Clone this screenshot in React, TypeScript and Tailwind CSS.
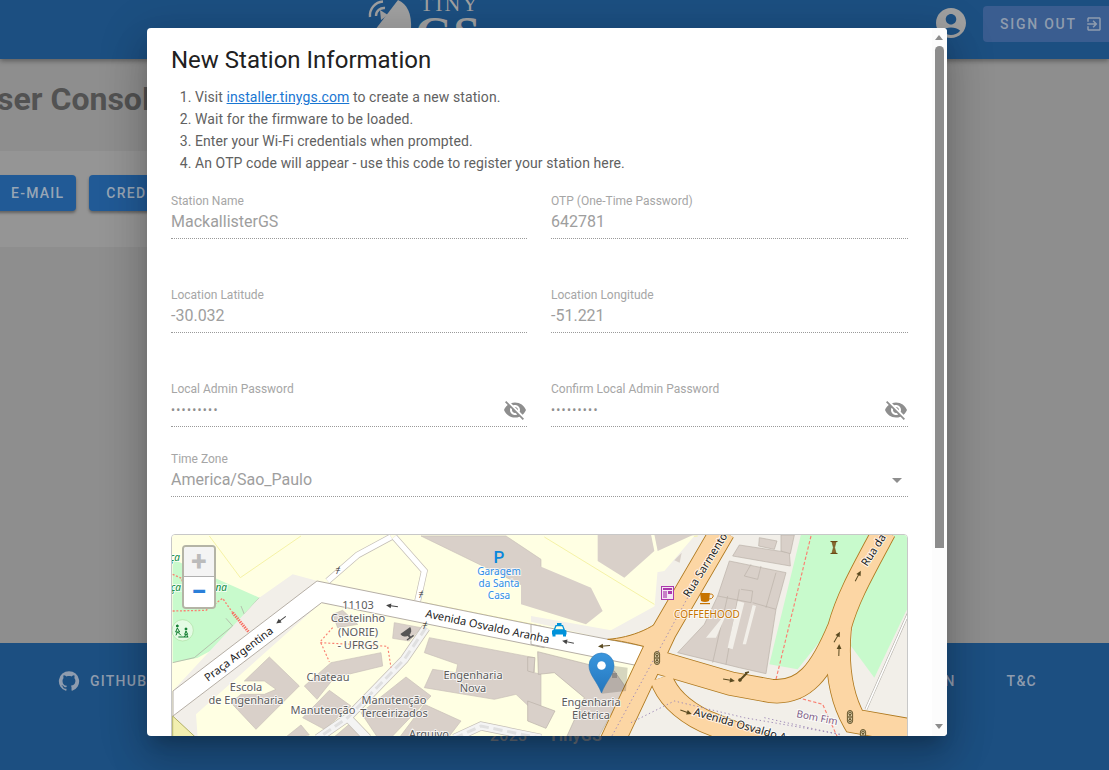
import { ReactNode } from 'react';

const ACCOUNT = 'M12 2C6.48 2 2 6.48 2 12s4.48 10 10 10 10-4.48 10-10S17.52 2 12 2zm0 4c1.93 0 3.5 1.57 3.5 3.5S13.93 13 12 13s-3.5-1.57-3.5-3.5S10.07 6 12 6zm0 14c-2.03 0-4.43-.82-6.14-2.88C7.55 15.8 9.68 15 12 15s4.45.8 6.14 2.12C16.43 19.18 14.03 20 12 20z';
const EXIT = 'M10.09 15.59L11.5 17l5-5-5-5-1.41 1.41L12.67 11H3v2h9.67l-2.58 2.59zM19 3H5c-1.11 0-2 .9-2 2v4h2V5h14v14H5v-4H3v4c0 1.1.89 2 2 2h14c1.1 0 2-.9 2-2V5c0-1.1-.9-2-2-2z';
const EYE_OFF = 'M12 7c2.76 0 5 2.24 5 5 0 .65-.13 1.26-.36 1.83l2.92 2.92c1.51-1.26 2.7-2.89 3.43-4.75-1.73-4.39-6-7.5-11-7.5-1.4 0-2.74.25-3.98.7l2.16 2.16C10.74 7.13 11.35 7 12 7zM2 4.27l2.28 2.28.46.46C3.08 8.3 1.78 10.02 1 12c1.73 4.39 6 7.5 11 7.5 1.55 0 3.03-.3 4.38-.84l.42.42L19.73 22 21 20.73 3.27 3 2 4.27zM7.53 9.8l1.55 1.55c-.05.21-.08.43-.08.65 0 1.66 1.34 3 3 3 .22 0 .44-.03.65-.08l1.55 1.55c-.67.33-1.41.53-2.2.53-2.76 0-5-2.24-5-5 0-.79.2-1.53.53-2.2zm4.31-.78l3.15 3.15.02-.16c0-1.66-1.34-3-3-3l-.17.01z';
const GITHUB = 'M12 1.27a11 11 0 00-3.48 21.46c.55.09.73-.28.73-.55v-1.84c-3.03.64-3.67-1.46-3.67-1.46-.55-1.29-1.28-1.65-1.28-1.65-.92-.65.1-.65.1-.65 1.1 0 1.73 1.1 1.73 1.1.92 1.65 2.57 1.2 3.21.92a2 2 0 01.64-1.47c-2.47-.27-5.04-1.19-5.04-5.5 0-1.1.46-2.1 1.2-2.84a3.76 3.76 0 010-2.93s.91-.28 3.11 1.1c1.8-.49 3.7-.49 5.5 0 2.1-1.38 3.02-1.1 3.02-1.1a3.76 3.76 0 010 2.93c.83.74 1.2 1.74 1.2 2.94 0 4.21-2.57 5.13-5.04 5.4.45.37.82.92.82 2.02v3.03c0 .27.1.64.73.55A11 11 0 0012 1.27';

function MuiIcon({ d, className }: { d: string; className: string }) {
  return (
    <svg viewBox="0 0 24 24" fill="currentColor" className={className}>
      <path d={d} />
    </svg>
  );
}

function Field({ label, value, eye }: { label: string; value: string; eye?: boolean }) {
  return (
    <div className="h-[45px] border-b border-dotted border-[#9a9a9a]">
      <div className="h-[14px] text-xs leading-[14px] text-[#a6a6a6]">{label}</div>
      <div className="mt-[2px] flex h-[24px] items-center justify-between text-base text-[#9e9e9e]">
        <span className={eye ? 'text-xs tracking-[1.25px] text-[#8e8e8e]' : ''}>{value}</span>
        {eye && <MuiIcon d={EYE_OFF} className="-mt-px h-6 w-6 text-[#8e8e8e]" />}
      </div>
    </div>
  );
}

function Arrow({ x, y, r, color = '#5a4a20' }: { x: number; y: number; r: number; color?: string }) {
  return (
    <g transform={`translate(${x} ${y}) rotate(${r})`} stroke={color} fill={color}>
      <line x1="-6" y1="0" x2="3" y2="0" strokeWidth="1" />
      <path d="M6 0 L1 -2.4 L1 2.4 Z" stroke="none" />
    </g>
  );
}

function Label({ x, y, children, size = 11, fill = '#5c5c5c', rotate, anchor = 'middle' }: { x: number; y: number; children: ReactNode; size?: number; fill?: string; rotate?: number; anchor?: 'middle' | 'start' | 'end' }) {
  return (
    <text
      x={x}
      y={y}
      fontSize={size}
      fill={fill}
      textAnchor={anchor}
      stroke="#ffffff"
      strokeOpacity={0.75}
      strokeWidth={2}
      paintOrder="stroke"
      transform={rotate ? `rotate(${rotate} ${x} ${y})` : undefined}
    >
      {children}
    </text>
  );
}

function Signal({ x, y }: { x: number; y: number }) {
  return (
    <g transform={`translate(${x} ${y})`} fill="none" stroke="#5a4a20" strokeWidth="0.9">
      <rect x="-2.6" y="-6.5" width="5.2" height="13" rx="2.6" fill="#d8c9a4" />
      <circle cx="0" cy="-3.6" r="1.3" />
      <circle cx="0" cy="0" r="1.3" />
      <circle cx="0" cy="3.6" r="1.3" />
    </g>
  );
}

const ORANGE_ROADS = [
  { d: 'M575 0 L400 300 L240 640', w: 72 },
  { d: 'M385 395 L600 458 L720 480 C820 490 870 420 925 290 C950 200 990 130 1060 0', w: 68 },
  { d: 'M925 290 C915 400 930 500 970 570 L1140 600', w: 70 },
  { d: 'M390 440 C410 500 460 540 520 570 L720 650', w: 66 },
];
const SLIP = 'M420 235 C380 290 300 320 230 325 C290 332 330 345 362 352 L400 300 Z';

function StationMap() {
  return (
    <svg viewBox="171 534 737 202" className="block h-[202px] w-[737px] font-['Noto_Sans',sans-serif]">
      <defs>
        <linearGradient id="pin" x1="0" y1="0" x2="0" y2="1">
          <stop offset="0" stopColor="#3a96dd" />
          <stop offset="1" stopColor="#2476bd" />
        </linearGradient>
      </defs>
      <rect x="171" y="534" width="737" height="202" fill="#ffffe3" />

      {/* left half, coordinates measured from (160,530) at 3x */}
      <g transform="translate(160 530) scale(0.33333)">
        <path d="M145 15 L238 140 L420 15" fill="none" stroke="#f5f2a6" strokeWidth="3" />
        <path d="M790 215 L1140 285 M1140 160 L1030 135" fill="none" stroke="#f5f2a6" strokeWidth="3" />
        <path d="M35 85 L295 200 L260 300 L110 380 L35 395 Z" fill="#c8facc" />
        <path d="M35 395 L100 380 L215 285 M295 200 L250 250 L240 225 M195 262 L215 285" fill="none" stroke="#a9a39b" strokeWidth="2" />
        <path d="M295 200 L395 130 L470 150 L480 215 L105 550 L110 620 L35 620 L35 480 Z" fill="#f2efe9" />
        <path d="M35 555 L105 620 L35 620 Z" fill="#f2efb0" stroke="#8f8f30" strokeWidth="2" />
        <circle cx="65" cy="298" r="32" fill="#e4fbe4" stroke="#aedfa3" strokeWidth="2" />
        <g fill="#0d7a2c" stroke="#0d7a2c" strokeWidth="3">
          <circle cx="49" cy="285" r="3" />
          <circle cx="75" cy="294" r="3" />
          <path d="M49 291 L44 303 L56 303 Z M49 303 L45 313 M50 303 L60 313" fill="none" />
          <path d="M75 300 L71 310 L80 310 Z M75 310 L70 318 M77 310 L80 318" fill="none" />
          <path d="M52 318 L82 318" />
        </g>
        <path d="M35 130 L62 142 L72 190 M35 240 L135 238 L185 202 L215 245" fill="none" stroke="#fa8072" strokeWidth="4" strokeDasharray="6 5" />
        <path d="M215 245 L262 302" fill="none" stroke="#fa6a5e" strokeWidth="9" strokeDasharray="4 3" />

        {[
          '325,378 415,465 285,595 210,515 240,490 310,490 345,475 310,450 250,450',
          '430,465 510,395 660,365 665,405 520,440 468,505',
          '425,560 505,478 570,525 490,595',
          '600,545 735,438 810,495 690,620 650,620',
          '715,620 790,520 900,570 860,622',
          '805,320 1120,380 1120,425 1140,430 1140,560 1065,490 1000,505 790,470 815,415 885,425 890,400 790,365',
          '515,250 545,238 590,280 530,290',
          '700,275 780,290 745,330 695,322',
          '515,622 570,575 610,622',
          '370,622 420,582 445,612',
          '780,15 1035,15 1140,85 1140,190',
        ].map((points) => (
          <polygon key={points} points={points} fill="#d9d0c9" stroke="#c9c0b8" strokeWidth="2" />
        ))}

        <path d="M690 18 L590 72 L500 150 M700 18 L790 120 L770 210" fill="none" stroke="#c4beb6" strokeWidth="20" />
        <path d="M690 18 L590 72 L500 150 M700 18 L790 120 L770 210" fill="none" stroke="#ffffff" strokeWidth="16" />
        <path d="M795 290 L730 385 L560 560 L470 622 M560 560 L620 622 M880 622 L960 585 L1140 622" fill="none" stroke="#c4beb6" strokeWidth="27" />
        <path d="M795 290 L730 385 L560 560 L470 622 M560 560 L620 622 M880 622 L960 585 L1140 622" fill="none" stroke="#f4f4f4" strokeWidth="23" />
        <path d="M795 290 L730 385 L560 560 L470 622 M880 622 L960 585 L1140 622" fill="none" stroke="#e0e0e0" strokeWidth="9" strokeDasharray="28 14" />
        <path d="M515 290 L478 332 L505 392 M478 335 L680 346 L690 410" fill="none" stroke="#fa8072" strokeWidth="3.5" strokeDasharray="6 6" />
        <polygon points="36,480 468,150 1150,288 1150,350 482,215 36,555" fill="#ffffff" stroke="#b5aea5" strokeWidth="3" strokeLinejoin="round" />
      </g>

      {/* right half, coordinates measured from (530,530) at 3x */}
      <g transform="translate(530 530) scale(0.33333)">
        <polygon points="390,0 1140,0 1140,620 200,620 330,410 360,350" fill="#f2efe9" />
        <polygon points="500,10 610,10 420,365 230,325 0,272 0,255 240,298 390,215" fill="#f2efe9" />
        <path d="M40 18 L370 220 M370 25 L500 15" fill="none" stroke="#f5f2a6" strokeWidth="3" />
        <polygon points="-110,15 365,15 490,15 400,120 280,140 200,90 170,15" fill="#ffffe3" />
        <polygon points="200,90 280,140 370,60 360,10 200,10" fill="#d9d0c9" />
        <polygon points="380,60 490,10 370,10" fill="#d9d0c9" />
        <polygon points="430,88 452,65 446,95" fill="#d9d0c9" />
        <polygon points="-30,82 180,170 215,240 165,280 -30,220" fill="#d9d0c9" />
        <polygon points="810,10 1015,10 960,120 915,270 800,415 715,400" fill="#c8facc" />
        <polygon points="1090,10 1140,10 1140,210 1030,440 960,345 965,280 1000,130" fill="#c8facc" />

        <path d="M1135 240 L1005 535" fill="none" stroke="#aaa69e" strokeWidth="8" />
        <path d="M1135 240 L1005 535" fill="none" stroke="#ffffff" strokeWidth="5" />
        <path d="M840 15 L735 445 M800 500 L875 520 L920 620" fill="none" stroke="#fa8072" strokeWidth="3.5" strokeDasharray="10 6" />

        {[
          '595,90 765,125 735,235 705,428 625,410 440,365 520,280 560,195',
          '625,42 775,65 778,105 605,75',
          '685,20 738,30 730,55 683,45',
          '750,12 790,12 778,68 750,60',
          '20,362 250,420 285,470 200,622 105,622 160,500 70,425 22,430',
          '-10,378 12,380 8,425 -10,420',
          '-10,510 72,540 45,592 -10,570',
        ].map((points) => (
          <polygon key={points} points={points} fill="#d9d0c9" stroke="#b9b0a8" strokeWidth="2" />
        ))}
        <path d="M590 195 L545 395 M625 175 L585 400 M660 100 L640 135 L680 145 L690 105 M735 125 L705 230 M630 175 L665 180 L660 215 L560 195 M665 215 L735 235" fill="none" stroke="#b9b0a8" strokeWidth="2" />
        <path d="M525 320 L590 240 L555 320 Z M620 210 L640 215 L605 355 L590 350 Z M665 222 L675 225 L645 340 L635 340 Z" fill="#f2efe9" />
        <polygon points="0,280 360,350 325,405 0,340" fill="#ffffff" stroke="#b5aea5" strokeWidth="3" />

        {ORANGE_ROADS.map((r) => (
          <path key={r.d} d={r.d} fill="none" stroke="#b07a20" strokeWidth={r.w + 5} />
        ))}
        <path d={SLIP} fill="#fcd6a4" stroke="#b07a20" strokeWidth="3" />
        {ORANGE_ROADS.map((r) => (
          <path key={r.d} d={r.d} fill="none" stroke="#fcd6a4" strokeWidth={r.w} />
        ))}
        <path d="M470 200 L240 620 M300 575 L430 510 L640 560 L930 610" fill="none" stroke="#a08cb8" strokeWidth="3" strokeDasharray="4 8" />
        <path d="M700 560 L930 612" fill="none" stroke="#a08cb8" strokeWidth="3" strokeDasharray="4 8" />

        <polygon points="180,395 290,410 285,480 212,488" fill="#000000" opacity="0.16" />
        <rect x="243" y="426" width="15" height="15" fill="#8f8a86" />
      </g>

      <text x="498" y="562" fontSize="17" fill="#0a87dc" textAnchor="middle" className="font-['Roboto',sans-serif] font-medium">P</text>
      <Label x={498} y={574} fill="#2f8ee6" size={10}>Garagem</Label>
      <Label x={498} y={586} fill="#2f8ee6" size={10}>da Santa</Label>
      <Label x={498} y={598} fill="#2f8ee6" size={10}>Casa</Label>

      <Label x={357} y={608}>11103</Label>
      <Label x={357} y={621}>Castelinho</Label>
      <Label x={357} y={635}>(NORIE)</Label>
      <Label x={357} y={648}>- UFRGS</Label>
      <Label x={327} y={680}>Chateau</Label>
      <Label x={245} y={690}>Escola</Label>
      <Label x={245} y={703}>de Engenharia</Label>
      <Label x={322} y={713}>Manutenção</Label>
      <Label x={393} y={703}>Manutenção</Label>
      <Label x={393} y={716}>Terceirizados</Label>
      <Label x={472} y={678}>Engenharia</Label>
      <Label x={472} y={691}>Nova</Label>
      <Label x={428} y={737}>Arquivo</Label>
      <Label x={590} y={705}>Engenharia</Label>
      <Label x={590} y={718}>Elétrica</Label>

      <Label x={424} y={616} rotate={12} fill="#1c1c1c" anchor="start">Avenida Osvaldo Aranha</Label>
      <Label x={207} y={681} rotate={-37} fill="#1c1c1c" anchor="start">Praça Argentina</Label>
      <Label x={688} y={597} rotate={-58} fill="#1c1c1c" anchor="start">Rua Sarmento</Label>
      <Label x={866} y={566} rotate={-57} fill="#1c1c1c" anchor="start">Rua da</Label>
      <Label x={692} y={714} rotate={16} fill="#1c1c1c" anchor="start">Avenida Osvaldo Aranha</Label>
      <Label x={795} y={716} rotate={11} size={10} fill="#7d5b85" anchor="start">Bom Fim</Label>
      <Label x={706} y={617} size={10} fill="#c77400">COFFEEHOOD</Label>
      <Label x={226} y={590} size={10} fill="#0c8a3c" anchor="end"><tspan fontStyle="italic">Praça Argentina</tspan></Label>
      <Label x={179} y={560} size={10} fill="#0c8a3c" anchor="end"><tspan fontStyle="italic">Praça</tspan></Label>

      <text x="337" y="572" fontSize="9" fill="#333" textAnchor="middle">≠</text>
      <text x="420" y="596" fontSize="9" fill="#333" textAnchor="middle">≠</text>
      <text x="424" y="627" fontSize="9" fill="#333" textAnchor="middle">≠</text>

      <Arrow x={280} y={619} r={143} color="#444" />
      <Arrow x={391} y={605} r={188} color="#444" />
      <Arrow x={567} y={641} r={192} color="#444" />
      <Arrow x={603} y={645} r={175} color="#5a4a20" />
      <Arrow x={728} y={679} r={10} />
      <Arrow x={685} y={711} r={20} />
      <Arrow x={857} y={575} r={-62} />
      <Arrow x={836} y={636} r={-60} />
      <Arrow x={838} y={649} r={-88} />

      <Signal x={656} y={657} />
      <Signal x={849} y={716} />
      <Signal x={862} y={735} />

      {/* satellite dish */}
      <g transform="translate(406 632) rotate(-35)" fill="#555">
        <path d="M-6 -3 A6 6 0 0 0 6 -3 Z" />
        <rect x="-1" y="1" width="2" height="5" />
        <rect x="-4" y="5" width="8" height="1.5" />
      </g>
      {/* taxi */}
      <g fill="#0092da">
        <rect x="556" y="622" width="4.5" height="2" />
        <path d="M554.5 624 H562 L564 629 H552.5 Z" />
        <path d="M551 630 Q551 629 552.5 629 H564 Q565.5 629 565.5 630 V633.5 H551 Z" />
        <rect x="551.5" y="633" width="3" height="2.5" />
        <rect x="562" y="633" width="3" height="2.5" />
        <path d="M555.5 625.2 H561.2 L562.3 628.2 H554.2 Z" fill="#ffffe3" />
      </g>
      {/* newspaper */}
      <rect x="660.5" y="585.5" width="12" height="13" fill="#f4e6f4" stroke="#ac39ac" />
      <rect x="662" y="587" width="9" height="2" fill="#ac39ac" />
      <rect x="662" y="590" width="4" height="7" fill="#c77ec7" />
      <rect x="667" y="590" width="4" height="3" fill="#ac39ac" />
      {/* coffee */}
      <g fill="#c77400">
        <path d="M699 592 L709 592 L708 600 Q704 602 700 600 Z" />
        <path d="M709 593 Q713 593 712 596 Q711 598 708 598" fill="none" stroke="#c77400" />
        <rect x="699" y="602" width="10" height="1.2" />
      </g>
      {/* hourglass */}
      <g stroke="#6b4a14" fill="#8a6b30">
        <path d="M829.5 540.5 H836.5 M829.5 552.5 H836.5" />
        <path d="M831 541 H835 L833.6 546.5 L835 552 H831 L832.4 546.5 Z" strokeWidth="0.6" />
      </g>
      {/* bench */}
      <path d="M738 680 L746 672" stroke="#5a4a20" strokeWidth="2" />
      <circle cx="739" cy="679" r="1.8" fill="#5a4a20" />
      <path d="M744 672 L748 671" stroke="#5a4a20" strokeWidth="1.5" />

      <path d="M600.5 692 C596 680 588 674 588 664.5 A12.5 12.5 0 0 1 613 664.5 C613 674 605 680 600.5 692 Z" fill="url(#pin)" stroke="#2a78b8" strokeWidth="0.6" />
      <circle cx="600.5" cy="664.5" r="4.3" fill="#ffffff" />
    </svg>
  );
}

export default function App() {
  return (
    <div className="relative flex h-[770px] w-[1109px] flex-col overflow-hidden bg-[#8e8e8e] font-['Roboto',sans-serif]">
      <header className="flex h-[59px] shrink-0 items-start bg-[#1c4f81] shadow-[0_2px_5px_rgba(0,0,0,0.35)]">
        <svg viewBox="360 0 130 59" className="ml-[360px] h-[59px] w-[130px] shrink-0">
          <g fill="none" stroke="#a0a0a0" strokeWidth="2.4">
            <path d="M370 17 A14 14 0 0 1 383 1.5" />
            <path d="M376 16 A8 8 0 0 1 385 8" />
          </g>
          <path d="M380 10 L388 15 L381 20 Z" fill="#a0a0a0" />
          <path d="M398 0 C407 4 412 13 411 30 L375 30 Z" fill="#a0a0a0" />
          <text x="420" y="11" fontSize="22" fill="#a0a0a0" textLength="58" className="font-['Liberation_Serif',serif]">TINY</text>
          <text x="415" y="50" fontSize="48" fontWeight="700" fill="#a0a0a0" textLength="65" className="font-['Liberation_Serif',serif]">GS</text>
        </svg>
        <MuiIcon d={ACCOUNT} className="ml-auto mt-[5px] h-9 w-9 shrink-0 text-[#a0a0a0]" />
        <div className="ml-[14px] mr-[-12px] mt-[6px] flex h-9 w-[138px] shrink-0 items-center rounded bg-[#3a5d90] pl-[17px] text-sm font-medium tracking-[1.75px] text-[#8f9cae]">
          SIGN OUT
          <MuiIcon d={EXIT} className="ml-[8px] h-[18px] w-[18px]" />
        </div>
      </header>

      <main className="ml-[-24px] flex-1">
        <h1 className="mt-[20px] h-[40px] text-[32px] font-bold leading-[40px] text-[#525252]">User Console</h1>
        <div className="mt-[32px] flex h-[96px] w-[880px] items-start gap-[13px] bg-[#959595] pl-[19px] pt-[24px]">
          <button className="h-9 rounded bg-[#215a96] pl-4 pr-3 text-sm font-medium tracking-[1.25px] text-[#98a6b5] shadow-[0_2px_3px_rgba(0,0,0,0.35)]">E-MAIL</button>
          <button className="h-9 whitespace-nowrap rounded bg-[#215a96] px-[17px] text-sm font-medium tracking-[1.25px] text-[#98a6b5] shadow-[0_2px_3px_rgba(0,0,0,0.35)]">CREDENTIALS</button>
        </div>
      </main>

      <footer className="relative h-[127px] shrink-0 bg-[#1c4f81] text-sm font-medium tracking-[1.25px] text-[#8f9cae]">
        <div className="flex items-center pl-[58px] pt-[27px]">
          <MuiIcon d={GITHUB} className="h-[22px] w-[22px]" />
          <span className="ml-[10px]">GITHUB</span>
          <span className="ml-auto mr-[51px]">N</span>
          <span className="mr-[72px]">T&amp;C</span>
        </div>
        <div className="mt-[32px] flex justify-center gap-[21px] pr-[17px] text-base tracking-[0.3px] text-[#666f7a]">
          <span>2023</span>
          <span className="font-bold">TinyGS</span>
        </div>
      </footer>

      <div role="dialog" className="absolute left-[147px] top-[28px] flex h-[708px] w-[800px] overflow-hidden rounded bg-white shadow-[0_11px_15px_-7px_rgba(0,0,0,0.2),0_24px_38px_3px_rgba(0,0,0,0.14),0_9px_46px_8px_rgba(0,0,0,0.12)]">
        <div className="w-[785px] shrink-0 pl-6 pr-[24px] pt-4">
          <h2 className="h-8 text-2xl font-normal leading-8 text-[#212121]">New Station Information</h2>
          <ol className="mt-[10px] list-decimal pl-6 text-sm leading-[22px] tracking-[0.09px] text-[#616161]">
            <li>
              Visit <span className="text-[#1976d2] underline">installer.tinygs.com</span> to create a new station.
            </li>
            <li>Wait for the firmware to be loaded.</li>
            <li>Enter your Wi-Fi credentials when prompted.</li>
            <li>An OTP code will appear - use this code to register your station here.</li>
          </ol>
          <div className="mt-[20px] grid grid-cols-[356px_357px] gap-x-6 gap-y-[49px]">
            <Field label="Station Name" value="MackallisterGS" />
            <Field label="OTP (One-Time Password)" value="642781" />
            <Field label="Location Latitude" value="-30.032" />
            <Field label="Location Longitude" value="-51.221" />
            <Field label="Local Admin Password" value="•••••••••" eye />
            <Field label="Confirm Local Admin Password" value="•••••••••" eye />
          </div>
          <div className="mt-[25px] h-[45px] border-b border-dotted border-[#9a9a9a]">
            <div className="h-[14px] text-xs leading-[14px] text-[#a6a6a6]">Time Zone</div>
            <div className="mt-[2px] flex h-[24px] items-center justify-between pr-[6px] text-base text-[#9e9e9e]">
              America/Sao_Paulo
              <span className="h-0 w-0 border-x-[5px] border-t-[5px] border-x-transparent border-t-[#8e8e8e]" />
            </div>
          </div>
          <div className="relative mt-[37px] h-[300px] overflow-hidden rounded border border-[#c8c8c8]">
            <StationMap />
            <div className="absolute left-[10px] top-[10px] overflow-hidden rounded border-2 border-[#b4b4a6]">
              <div className="flex h-[30px] w-[30px] items-center justify-center border-b border-[#b0b0b0] bg-[#f4f4f4] text-[28px] font-bold text-[#bbbbbb]">+</div>
              <div className="flex h-[30px] w-[30px] items-center justify-center bg-white text-[28px] font-bold text-[#2a7fd9]">−</div>
            </div>
          </div>
        </div>
        <div className="relative w-[15px] shrink-0 bg-[#fcfcfc]">
          <span className="absolute left-[3px] top-[7px] h-0 w-0 border-x-[4.5px] border-b-[5px] border-x-transparent border-b-[#8c8c8c]" />
          <div className="absolute left-[3px] top-[18px] h-[502px] w-[9px] rounded-t-[5px] bg-[#8c8c8c]" />
          <span className="absolute bottom-[7px] left-[3px] h-0 w-0 border-x-[4.5px] border-t-[5px] border-x-transparent border-t-[#8c8c8c]" />
        </div>
      </div>
    </div>
  );
}
